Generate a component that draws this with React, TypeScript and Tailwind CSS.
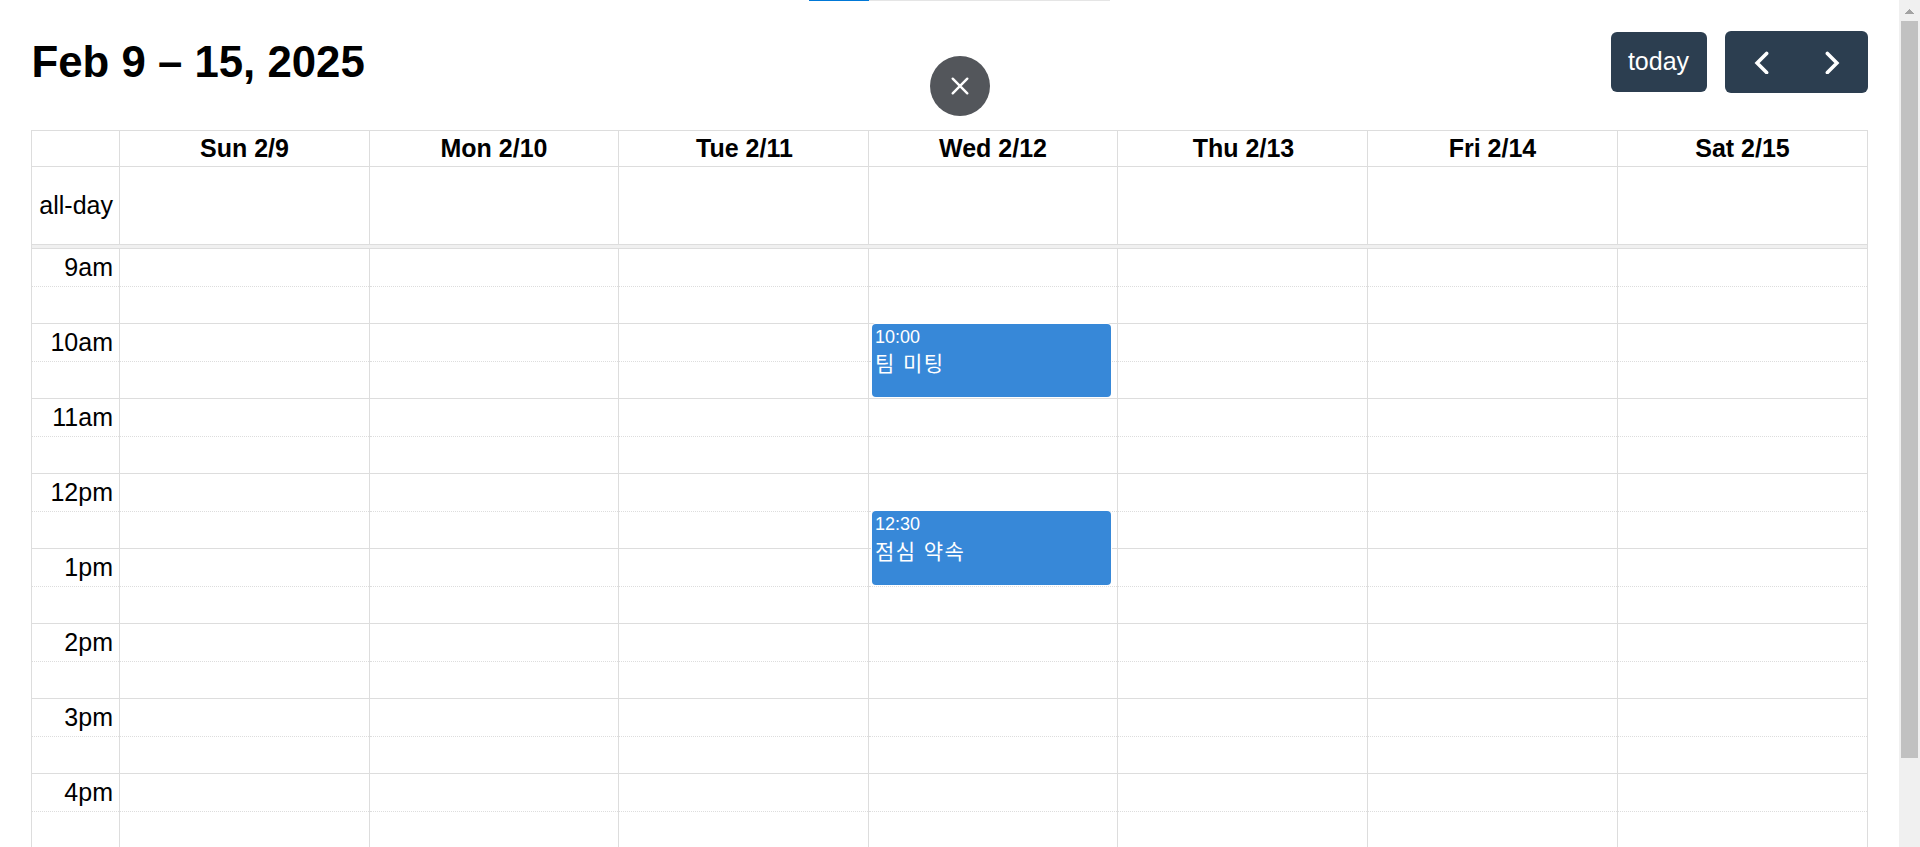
import React from "react";

type CalendarEvent = { day: number; slot: string; time: string; title: string; height: string };

const days = [
  { label: "Sun 2/9", width: "w-[250px]" },
  { label: "Mon 2/10", width: "w-[249px]" },
  { label: "Tue 2/11", width: "w-[250px] indent-[2px]" },
  { label: "Wed 2/12", width: "w-[249px]" },
  { label: "Thu 2/13", width: "w-[250px] indent-[2px]" },
  { label: "Fri 2/14", width: "w-[250px]" },
  { label: "Sat 2/15", width: "w-[250px]" },
];

const hours = ["9am", "10am", "11am", "12pm", "1pm", "2pm", "3pm", "4pm"];

const events: CalendarEvent[] = [
  { day: 3, slot: "10am", time: "10:00", title: "팀 미팅", height: "h-[73px]" },
  { day: 3, slot: "12pm-half", time: "12:30", title: "점심 약속", height: "h-[74px]" },
];

function EventCard({ event }: { event: CalendarEvent }) {
  const half = event.slot.endsWith("-half");
  return (
    <div
      className={`absolute left-[3px] z-10 w-[239px] rounded-[4px] bg-[#3788d8] px-[3px] pt-[3px] text-white shadow-[0_0_0_1px_#fff] ${event.height} ${
        half ? "top-0" : "top-[1px]"
      }`}
    >
      <div className="text-[18px] leading-[20px]">{event.time}</div>
      <div
        className={`font-['Noto_Sans_CJK_KR',sans-serif] text-[21px] leading-[26px] tracking-[1.4px] [word-spacing:1.2px] ${
          half ? "mt-[3px]" : "mt-[2px]"
        }`}
      >
        {event.title}
      </div>
    </div>
  );
}

function Slot({ label, slot, half }: { label?: string; slot: string; half?: boolean }) {
  const line = half ? "border-t border-dotted border-[#ddd]" : "border-t border-[#ddd]";
  return (
    <div className={half ? "flex h-[37px]" : "flex h-[38px]"}>
      <div className={`w-[87px] pr-[6px] pt-[4px] text-right leading-[28px] ${line}`}>{label}</div>
      {days.map((day, i) => (
        <div key={day.label} className={`relative border-l border-[#ddd] ${day.width}`}>
          <div className={line}></div>
          {events
            .filter((e) => e.day === i && e.slot === slot)
            .map((e) => (
              <EventCard key={e.time} event={e} />
            ))}
        </div>
      ))}
    </div>
  );
}

function Toolbar() {
  return (
    <div className="flex h-[62px] items-center justify-between">
      <h2 className="pl-[0.5px] text-[43.75px] font-bold leading-[50px]">Feb 9 – 15, 2025</h2>
      <div className="flex items-center gap-[18px]">
        <button className="h-[60px] w-[96px] rounded-[6px] bg-[#2c3e50] pb-[1px] pr-[1px] text-white">today</button>
        <div className="flex h-[62px] w-[143px] items-center rounded-[6px] bg-[#2c3e50] text-white">
          <button className="flex h-full w-[72px] items-center justify-center" aria-label="prev">
            <svg className="h-[24px] w-[16px]" viewBox="0 0 16 24" fill="none" stroke="currentColor" strokeWidth="3.6">
              <path d="M13.6 3.4 L4.1 13 L13.6 22.6" strokeLinecap="round" />
            </svg>
          </button>
          <button className="flex h-full w-[71px] items-center justify-center" aria-label="next">
            <svg className="h-[24px] w-[16px]" viewBox="0 0 16 24" fill="none" stroke="currentColor" strokeWidth="3.6">
              <path d="M2.4 3.4 L11.9 13 L2.4 22.6" strokeLinecap="round" />
            </svg>
          </button>
        </div>
      </div>
    </div>
  );
}

function Scrollbar() {
  return (
    <div className="flex w-[21px] flex-col items-center bg-[#f0f0f0]">
      <div className="flex h-[21px] items-end pb-[7px]">
        <svg className="h-[5px] w-[9px]" viewBox="0 0 9 5" fill="#a3a3a3" shapeRendering="crispEdges">
          <path d="M0 5 L4.5 0 L9 5 Z" />
        </svg>
      </div>
      <div className="h-[737px] w-[17px] bg-[#c1c1c1]"></div>
    </div>
  );
}

export default function App() {
  return (
    <div className="relative flex h-[847px] w-[1920px] overflow-hidden bg-white font-['Liberation_Sans',Arial,sans-serif] text-[25px] text-black">
      <div className="flex-1 overflow-hidden pl-[31px] pr-[31px] pt-[31px]">
        <Toolbar />
        <div className="mt-[37px] w-[1837px] border border-[#ddd] border-b-0">
          <div className="flex h-[36px] border-b border-[#ddd]">
            <div className="w-[87px]"></div>
            {days.map((day) => (
              <div
                key={day.label}
                className={`border-l border-[#ddd] pt-[3px] text-center font-bold leading-[28px] ${day.width}`}
              >
                {day.label}
              </div>
            ))}
          </div>
          <div className="flex h-[77px]">
            <div className="flex w-[87px] items-center justify-end pr-[6px]">all-day</div>
            {days.map((day) => (
              <div key={day.label} className={`border-l border-[#ddd] ${day.width}`}></div>
            ))}
          </div>
          <div className="h-[4px] border-t border-[#ddd] bg-[#f0f0f0]"></div>
          {hours.map((hour) => (
            <React.Fragment key={hour}>
              <Slot label={hour} slot={hour} />
              <Slot slot={`${hour}-half`} half />
            </React.Fragment>
          ))}
        </div>
      </div>
      <Scrollbar />

      {/* fullscreen exit overlay */}
      <div className="absolute left-[809px] top-0 flex h-px w-[301px] bg-[#e5e5e5]">
        <div className="w-[60px] bg-[#0078d7]"></div>
      </div>
      <div className="absolute left-[930px] top-[56px] flex h-[60px] w-[60px] items-center justify-center rounded-full bg-[#53565b]">
        <svg className="h-[18px] w-[18px]" viewBox="0 0 18 18" stroke="#fff" strokeWidth="2.4" strokeLinecap="round">
          <path d="M1.7 1.7 L16.3 16.3 M16.3 1.7 L1.7 16.3" />
        </svg>
      </div>
    </div>
  );
}
